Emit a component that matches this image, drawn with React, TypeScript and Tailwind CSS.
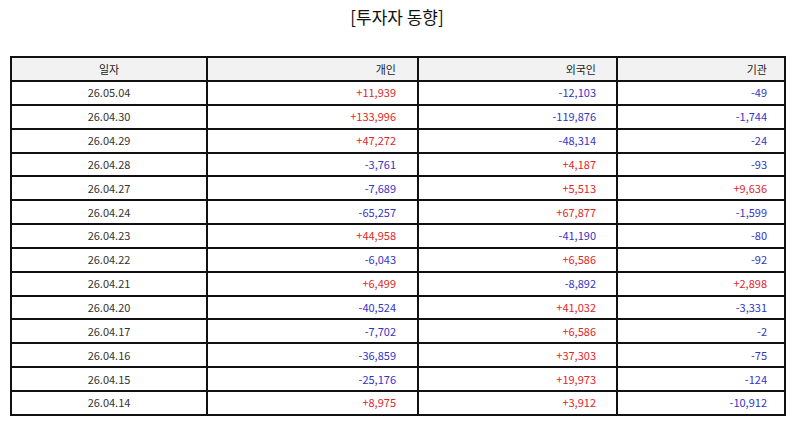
const ROWS: [string, number, number, number][] = [
  ["26.05.04", 11939, -12103, -49],
  ["26.04.30", 133996, -119876, -1744],
  ["26.04.29", 47272, -48314, -24],
  ["26.04.28", -3761, 4187, -93],
  ["26.04.27", -7689, 5513, 9636],
  ["26.04.24", -65257, 67877, -1599],
  ["26.04.23", 44958, -41190, -80],
  ["26.04.22", -6043, 6586, -92],
  ["26.04.21", 6499, -8892, 2898],
  ["26.04.20", -40524, 41032, -3331],
  ["26.04.17", -7702, 6586, -2],
  ["26.04.16", -36859, 37303, -75],
  ["26.04.15", -25176, 19973, -124],
  ["26.04.14", 8975, 3912, -10912],
];

function fmt(n: number) {
  return (n > 0 ? "+" : "") + n.toLocaleString("en-US");
}

function Num({ value, pad }: { value: number; pad: string }) {
  return (
    <td
      className={`border-2 border-[#111] text-right ${pad} ${
        value > 0 ? "text-[#e0262b]" : "text-[#3434c4]"
      }`}
    >
      {fmt(value)}
    </td>
  );
}

export default function App() {
  return (
    <div
      className="w-[794px] h-[425px] bg-white text-[#333] overflow-hidden"
      style={{ fontFamily: '"Noto Sans CJK KR", "Noto Sans", sans-serif' }}
    >
      <div className="pt-[5px] h-[56px] text-center text-[17px] leading-[24px] text-[#111]">
        [투자자 동향]
      </div>
      <table className="ml-[10px] w-[775px] border-collapse table-fixed text-[11px] leading-none">
        <colgroup>
          <col className="w-[196px]" />
          <col className="w-[211px]" />
          <col className="w-[199px]" />
          <col className="w-[168px]" />
        </colgroup>
        <thead>
          <tr className="h-[24px] bg-[#f2f2f2] text-[#222]">
            <th className="border-2 border-[#111] font-normal text-center">일자</th>
            <th className="border-2 border-[#111] font-normal text-right pr-[21px]">개인</th>
            <th className="border-2 border-[#111] font-normal text-right pr-[20px]">외국인</th>
            <th className="border-2 border-[#111] font-normal text-right pr-[17px]">기관</th>
          </tr>
        </thead>
        <tbody>
          {ROWS.map(([date, a, b, c]) => (
            <tr key={date} className="h-[23.85px]">
              <td className="border-2 border-[#111] text-center">{date}</td>
              <Num value={a} pad="pr-[21px]" />
              <Num value={b} pad="pr-[20px]" />
              <Num value={c} pad="pr-[17px]" />
            </tr>
          ))}
        </tbody>
      </table>
    </div>
  );
}
